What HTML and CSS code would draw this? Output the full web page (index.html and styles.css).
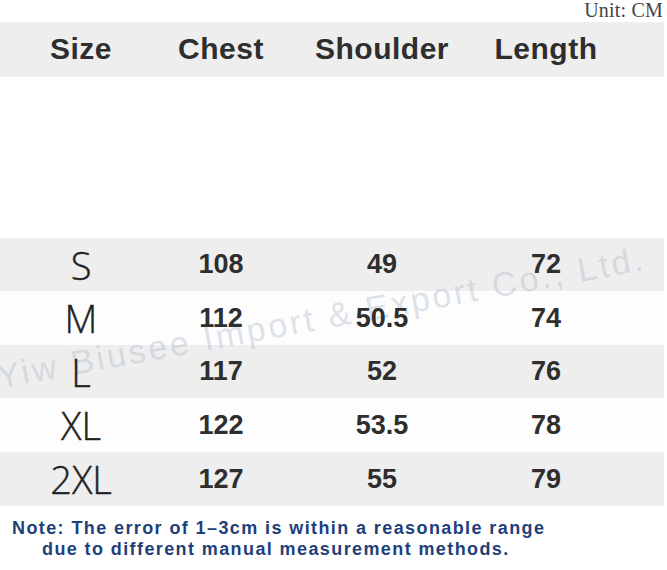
FILE: index.html
```html
<!DOCTYPE html>
<html lang="en">
<head>
<meta charset="utf-8">
<title>Size Chart</title>
<link rel="stylesheet" href="styles.css">
</head>
<body>
<div class="chart">
  <div class="unit">Unit: CM</div>
  <div class="row head">
    <div class="cell">Size</div>
    <div class="cell">Chest</div>
    <div class="cell">Shoulder</div>
    <div class="cell">Length</div>
  </div>
  <div class="spacer"></div>
  <div class="body">
    <div class="row gray r1"><div class="cell size">S</div><div class="cell">108</div><div class="cell">49</div><div class="cell">72</div></div>
    <div class="row white r2"><div class="cell size">M</div><div class="cell">112</div><div class="cell">50.5</div><div class="cell">74</div></div>
    <div class="row gray r1"><div class="cell size">L</div><div class="cell">117</div><div class="cell">52</div><div class="cell">76</div></div>
    <div class="row white r2"><div class="cell size">XL</div><div class="cell">122</div><div class="cell">53.5</div><div class="cell">78</div></div>
    <div class="row gray r2"><div class="cell size">2XL</div><div class="cell">127</div><div class="cell">55</div><div class="cell">79</div></div>
    <div class="watermark">Yiw Biusee Import &amp; Export Co., Ltd.</div>
  </div>
  <div class="note">
    <p class="line1">Note: The error of 1–3cm is within a reasonable range</p>
    <p class="line2">due to different manual measurement methods.</p>
  </div>
</div>
</body>
</html>
```
FILE: styles.css
```css
html, body {
  margin: 0;
  padding: 0;
  background: #ffffff;
}
.chart {
  width: 667px;
  height: 570px;
  overflow: hidden;
  font-family: "Liberation Sans", Arial, sans-serif;
  color: #333333;
}
.unit {
  height: 22px;
  box-sizing: border-box;
  padding-right: 4px;
  text-align: right;
  font-family: "Liberation Serif", "Times New Roman", serif;
  font-size: 20px;
  letter-spacing: 0.2px;
  line-height: 20px;
  color: #444444;
}
.row {
  width: 664px;
  display: grid;
  grid-template-columns: 162px 118px 204px 124px 56px;
  align-items: center;
}
.cell {
  text-align: center;
}
.head {
  height: 55px;
  background: #eeeeee;
  font-size: 30px;
  font-weight: bold;
  color: #333333;
}
.head .cell {
  padding-bottom: 2px;
}
.spacer {
  height: 161px;
}
.body {
  position: relative;
}
.gray {
  background: #eeeeee;
}
.white {
  background: #fdfdfd;
}
.r1 { height: 53px; }
.r2 { height: 54px; }
.row .cell {
  font-size: 27px;
  font-weight: bold;
  color: #2e2e2e;
  position: relative;
  z-index: 2;
}
.head .cell {
  font-size: 30px;
  letter-spacing: 0.5px;
}
.row .size {
  font-family: "Open Sans", "Noto Sans", sans-serif;
  font-weight: 300;
  font-size: 38px;
  color: #222222;
  -webkit-text-stroke: 0.4px #222222;
}
.watermark {
  position: absolute;
  left: -6px;
  top: 120px;
  transform-origin: 0 0;
  transform: rotate(-10.4deg);
  font-family: "Liberation Sans", Arial, sans-serif;
  font-size: 34px;
  letter-spacing: 3px;
  white-space: nowrap;
  color: rgba(170, 182, 200, 0.4);
  pointer-events: none;
  z-index: 1;
}
.note {
  padding-top: 12px;
  color: #1f3f7a;
  font-weight: bold;
  font-size: 18px;
  letter-spacing: 1.4px;
  line-height: 21px;
}
.note p {
  margin: 0;
  white-space: nowrap;
}
.line1 {
  padding-left: 12px;
}
.line2 {
  padding-left: 42px;
}
```
